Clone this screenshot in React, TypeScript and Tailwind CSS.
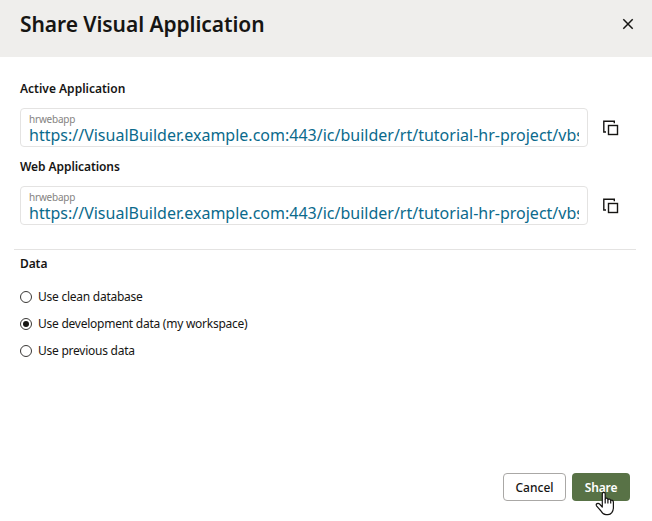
import React from "react";

const url = "https://VisualBuilder.example.com:443/ic/builder/rt/tutorial-hr-project/vbs";

function CopyIcon() {
  return (
    <svg width="16" height="16" viewBox="0 0 16 16" fill="none" stroke="#161513" strokeWidth="1.4">
      <path d="M3 12H.8V1.3H11.3V3.2" />
      <rect x="5.5" y="5.5" width="9" height="9" />
    </svg>
  );
}

function LinkField({ title, tracking }: { title: string; tracking: string }) {
  return (
    <section className="h-[78px]">
      <h2 className={"h-[27px] text-[12px] leading-[16px] font-semibold " + tracking}>{title}</h2>
      <div className="flex items-center">
        <div className="h-[39px] w-[568px] rounded-[4px] border border-[#e4e3e2] px-2 pt-[3px]">
          <div className="h-[14px] text-[10px] leading-[14px] tracking-[-0.2px] text-[#858381]">hrwebapp</div>
          <div className="h-[20px] overflow-hidden text-[16px] leading-[19px] whitespace-nowrap text-[#0b6a8c]">
            <span>{url}</span>
          </div>
        </div>
        <button className="ml-[15px]" aria-label="Copy">
          <CopyIcon />
        </button>
      </div>
    </section>
  );
}

function Option({ label, checked }: { label: string; checked?: boolean }) {
  return (
    <label className="flex h-[27px] items-center">
      <span className="flex size-3 items-center justify-center rounded-full border border-[#3a3836]">
        {checked && <span className="size-[6px] rounded-full bg-[#161513]" />}
      </span>
      <span className="ml-[6px] text-[12px] leading-[17px] tracking-[-0.25px] whitespace-nowrap">{label}</span>
    </label>
  );
}

export default function App() {
  return (
    <div className="flex h-[521px] w-[652px] flex-col overflow-hidden bg-white font-['Noto_Sans',sans-serif] text-[#161513]">
      <header className="flex h-[57px] items-start justify-between bg-[#efeeec] pr-[15px] pl-5">
        <h1 className="pt-[9px] text-[21px] leading-[30px] font-semibold tracking-[-0.07px] whitespace-nowrap">
          <span>Share Visual Application</span>
        </h1>
        <svg className="mt-[16px]" width="18" height="16" viewBox="0 0 18 16" stroke="#161513" strokeWidth="1.5">
          <path d="M4.3 3.3L13.7 12.7M13.7 3.3L4.3 12.7" />
        </svg>
      </header>
      <main className="flex-1 pt-6 pl-5">
        <LinkField title="Active Application" tracking="tracking-normal" />
        <LinkField title="Web Applications" tracking="tracking-[-0.08px]" />
        <div className="-ml-[6px] mt-3 h-px w-[622px] bg-[#e4e3e2]" />
        <h2 className="mt-[6px] h-[27px] text-[12px] leading-[16px] font-semibold tracking-[-0.1px]">Data</h2>
        <Option label="Use clean database" />
        <Option label="Use development data (my workspace)" checked />
        <Option label="Use previous data" />
      </main>
      <footer className="flex h-[48px] justify-end gap-[6px] pr-[22px]">
        <button className="h-7 w-[63px] rounded-[4px] border border-[#aaa8a6] text-[12px] leading-[17px] font-medium">Cancel</button>
        <button className="relative h-7 w-[58px] rounded-[4px] bg-[#587246] text-[12px] leading-[17px] font-semibold tracking-[-0.15px] text-white">
          Share
          <svg className="absolute top-[18px] left-[23px]" width="21" height="26" viewBox="0 0 21 26" fill="white" stroke="#161513" strokeWidth="1.2" strokeLinejoin="round">
            <path d="M7.3 16V3C7.3 .8 10.2 .8 10.2 3V8C10.7 6.7 12.9 7 12.9 8.6C13.5 7.6 15.7 8 15.7 9.5C16.5 8.9 18.4 9.4 18.4 11V16.5C18.4 20.5 16 23.6 13 23.6H11C8.5 23.6 7.2 22.2 6 20L1.5 14.8C.5 13 2.9 11.4 4.6 13L7.3 16Z" />
            <path d="M10.2 8V12.5M12.9 8.6V12.5M15.7 9.5V12.5" fill="none" />
          </svg>
        </button>
      </footer>
    </div>
  );
}
